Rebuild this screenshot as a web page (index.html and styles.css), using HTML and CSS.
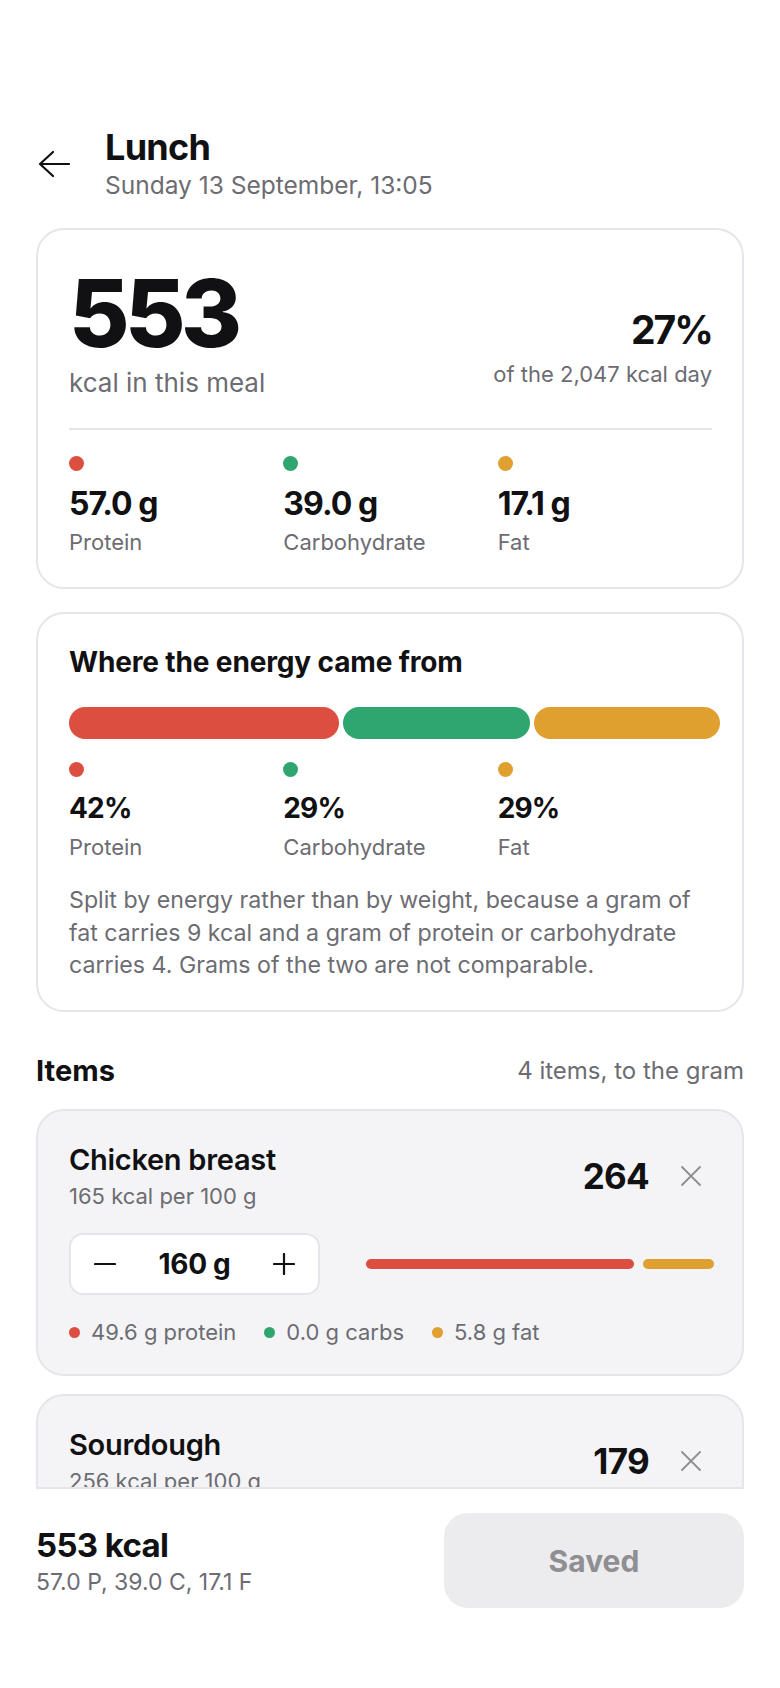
FILE: index.html
```html
<!DOCTYPE html>
<html lang="en">
<head>
    <meta charset="UTF-8">
    <title>Lunch</title>

    <link rel="stylesheet" href="styles.css">
</head>
<body>

    <div class="app">

        <div class="content">

            <div class="header">
                <button class="back">
                    <svg width="32" height="32" viewBox="0 0 32 32">
                        <path d="M31 16H2M15 4L2 16l13 12" fill="none" stroke="#111" stroke-width="2.2" stroke-linecap="round" stroke-linejoin="round"/>
                    </svg>
                </button>
                <div class="title-block">
                    <h1>Lunch</h1>
                    <div class="date">Sunday 13 September, 13:05</div>
                </div>
            </div>

            <div class="card summary">
                <div class="summary-top">
                    <div>
                        <div class="big-kcal">553</div>
                        <div class="muted kcal-label">kcal in this meal</div>
                    </div>
                    <div class="share">
                        <div class="share-pct">27%</div>
                        <div class="muted share-label">of the 2,047 kcal day</div>
                    </div>
                </div>

                <div class="divider"></div>

                <div class="macros">
                    <div class="macro">
                        <span class="dot protein"></span>
                        <div class="macro-value">57.0 g</div>
                        <div class="muted macro-label">Protein</div>
                    </div>
                    <div class="macro">
                        <span class="dot carbs"></span>
                        <div class="macro-value">39.0 g</div>
                        <div class="muted macro-label">Carbohydrate</div>
                    </div>
                    <div class="macro">
                        <span class="dot fat"></span>
                        <div class="macro-value">17.1 g</div>
                        <div class="muted macro-label">Fat</div>
                    </div>
                </div>
            </div>

            <div class="card energy">
                <h2>Where the energy came from</h2>

                <div class="energy-bar">
                    <div class="seg protein" style="width: 42%"></div>
                    <div class="seg carbs" style="width: 29%"></div>
                    <div class="seg fat" style="width: 29%"></div>
                </div>

                <div class="macros">
                    <div class="macro">
                        <span class="dot protein"></span>
                        <div class="macro-value">42%</div>
                        <div class="muted macro-label">Protein</div>
                    </div>
                    <div class="macro">
                        <span class="dot carbs"></span>
                        <div class="macro-value">29%</div>
                        <div class="muted macro-label">Carbohydrate</div>
                    </div>
                    <div class="macro">
                        <span class="dot fat"></span>
                        <div class="macro-value">29%</div>
                        <div class="muted macro-label">Fat</div>
                    </div>
                </div>

                <p class="muted note">Split by energy rather than by weight, because a gram of fat carries 9 kcal and a gram of protein or carbohydrate carries 4. Grams of the two are not comparable.</p>
            </div>

            <div class="items-head">
                <h2>Items</h2>
                <span class="muted">4 items, to the gram</span>
            </div>

            <div class="item">
                <div class="item-top">
                    <div>
                        <div class="item-name">Chicken breast</div>
                        <div class="muted item-sub">165 kcal per 100 g</div>
                    </div>
                    <div class="item-right">
                        <div class="item-kcal">264</div>
                        <button class="remove">
                            <svg width="20" height="20" viewBox="0 0 20 20">
                                <path d="M1 1l18 18M19 1L1 19" stroke="#8e8e93" stroke-width="1.8" stroke-linecap="round"/>
                            </svg>
                        </button>
                    </div>
                </div>

                <div class="item-mid">
                    <div class="stepper">
                        <button class="step">
                            <svg width="22" height="22" viewBox="0 0 22 22"><path d="M1 11h20" stroke="#111" stroke-width="2.2" stroke-linecap="round"/></svg>
                        </button>
                        <div class="step-value">160 g</div>
                        <button class="step">
                            <svg width="22" height="22" viewBox="0 0 22 22"><path d="M1 11h20M11 1v20" stroke="#111" stroke-width="2.2" stroke-linecap="round"/></svg>
                        </button>
                    </div>
                    <div class="mini-bar">
                        <div class="mini protein" style="flex-grow: 198"></div>
                        <div class="mini fat" style="flex-grow: 52"></div>
                    </div>
                </div>

                <div class="item-macros muted">
                    <span><i class="small-dot protein"></i>49.6 g protein</span>
                    <span><i class="small-dot carbs"></i>0.0 g carbs</span>
                    <span><i class="small-dot fat"></i>5.8 g fat</span>
                </div>
            </div>

            <div class="item">
                <div class="item-top">
                    <div>
                        <div class="item-name">Sourdough</div>
                        <div class="muted item-sub">256 kcal per 100 g</div>
                    </div>
                    <div class="item-right">
                        <div class="item-kcal">179</div>
                        <button class="remove">
                            <svg width="20" height="20" viewBox="0 0 20 20">
                                <path d="M1 1l18 18M19 1L1 19" stroke="#8e8e93" stroke-width="1.8" stroke-linecap="round"/>
                            </svg>
                        </button>
                    </div>
                </div>

                <div class="item-mid">
                    <div class="stepper">
                        <button class="step">
                            <svg width="22" height="22" viewBox="0 0 22 22"><path d="M1 11h20" stroke="#111" stroke-width="2.2" stroke-linecap="round"/></svg>
                        </button>
                        <div class="step-value">70 g</div>
                        <button class="step">
                            <svg width="22" height="22" viewBox="0 0 22 22"><path d="M1 11h20M11 1v20" stroke="#111" stroke-width="2.2" stroke-linecap="round"/></svg>
                        </button>
                    </div>
                    <div class="mini-bar">
                        <div class="mini protein" style="flex-grow: 25"></div>
                        <div class="mini carbs" style="flex-grow: 140"></div>
                        <div class="mini fat" style="flex-grow: 14"></div>
                    </div>
                </div>

                <div class="item-macros muted">
                    <span><i class="small-dot protein"></i>6.3 g protein</span>
                    <span><i class="small-dot carbs"></i>35.0 g carbs</span>
                    <span><i class="small-dot fat"></i>1.6 g fat</span>
                </div>
            </div>

        </div>

        <div class="footer">
            <div class="footer-total">
                <div class="footer-kcal">553 kcal</div>
                <div class="muted footer-macros">57.0 P, 39.0 C, 17.1 F</div>
            </div>
            <button class="saved">Saved</button>
        </div>

    </div>

</body>
</html>
```

FILE: styles.css
```css
html, body{
    height: 100%;
}

body{
    margin: 0;
    overflow: hidden;
    background: white;
    color: #111113;
    font-family: Inter, "Noto Sans", sans-serif;
}

button{
    font-family: inherit;
    border: none;
    background: none;
    padding: 0;
    cursor: pointer;
}

.app{
    height: 100%;
    display: flex;
    flex-direction: column;
}

.content{
    flex: 1;
    overflow: hidden;
    padding: 0 36px;
}

.muted{
    color: #6c6c72;
}

/* header */
.header{
    display: flex;
    align-items: center;
    gap: 35px;
    padding-top: 126px;
    margin-bottom: 26px;
}

.back{
    display: flex;
    width: 32px;
    height: 32px;
    margin-left: 2px;
}

h1{
    margin: 0;
    font-size: 36px;
    line-height: 42px;
    font-weight: 700;
    letter-spacing: -0.02em;
}

.date{
    font-size: 24.5px;
    line-height: 34px;
    color: #6c6c72;
}

/* cards */
.card{
    border: 2px solid #e5e5ea;
    border-radius: 28px;
    padding: 32px 30px 30px 31px;
    margin-bottom: 23px;
}

.summary-top{
    display: flex;
    justify-content: space-between;
    align-items: flex-end;
}

.big-kcal{
    font-size: 93px;
    line-height: 96px;
    font-weight: 800;
    letter-spacing: -0.05em;
    margin-top: 3px;
}

.kcal-label{
    font-size: 26px;
    line-height: 32px;
    margin-top: 6px;
}

.share{
    text-align: right;
    padding-bottom: 10px;
}

.share-pct{
    font-size: 39px;
    line-height: 44px;
    font-weight: 700;
    letter-spacing: -0.05em;
    margin-bottom: 7px;
}

.share-label{
    font-size: 22px;
    line-height: 30px;
}

.divider{
    height: 2px;
    background: #e5e5ea;
    margin: 29px 0 26px;
}

.macros{
    display: grid;
    grid-template-columns: repeat(3, 1fr);
}

.dot{
    display: block;
    width: 15px;
    height: 15px;
    border-radius: 50%;
    margin-bottom: 13px;
}

.protein{ background: #dc4f40; }
.carbs{ background: #2fa56f; }
.fat{ background: #e0a030; }

.macro-value{
    font-size: 32px;
    line-height: 40px;
    font-weight: 700;
    letter-spacing: -0.03em;
}

.macro-label{
    font-size: 22px;
    line-height: 30px;
    margin-top: 3px;
}

h2{
    margin: 0;
    font-size: 28px;
    line-height: 32px;
    font-weight: 700;
    letter-spacing: -0.005em;
}

.energy-bar{
    display: flex;
    gap: 4px;
    margin: 29px 0 23px;
}

.seg{
    flex-shrink: 0;
    height: 32px;
    border-radius: 16px;
}

.energy .macro-value{
    font-size: 28px;
    line-height: 36px;
}

.energy .macro-label{
    margin-top: 6px;
}

.note{
    margin: 22px 0 0;
    font-size: 23.2px;
    line-height: 32.5px;
}

.energy{
    padding-bottom: 28px;
}

/* items */
.items-head{
    display: flex;
    justify-content: space-between;
    align-items: center;
    margin: 41px 0 20px;
    font-size: 24px;
}

.items-head h2{
    font-size: 29px;
    line-height: 36px;
    letter-spacing: 0;
}

.item{
    background: #f4f4f6;
    border: 2px solid #e5e5ea;
    border-radius: 28px;
    padding: 31px 31px 27px;
    margin-bottom: 18px;
}

.item-top{
    display: flex;
    justify-content: space-between;
    align-items: center;
}

.item-name{
    font-size: 29px;
    line-height: 36px;
    font-weight: 600;
    letter-spacing: -0.01em;
}

.item-sub{
    font-size: 22px;
    line-height: 30px;
    margin-top: 3px;
}

.item-right{
    display: flex;
    align-items: center;
    gap: 22px;
}

.item-kcal{
    font-size: 35px;
    font-weight: 700;
    letter-spacing: -0.02em;
}

.remove{
    display: flex;
    justify-content: center;
    width: 40px;
}

.item-mid{
    display: flex;
    align-items: center;
    gap: 46px;
    margin-top: 22px;
}

.stepper{
    display: flex;
    align-items: center;
    width: 251px;
    height: 62px;
    box-sizing: border-box;
    padding: 0 12px;
    background: white;
    border: 2px solid #e5e5ea;
    border-radius: 14px;
}

.step{
    display: flex;
    justify-content: center;
    width: 44px;
}

.step-value{
    flex: 1;
    text-align: center;
    font-size: 28px;
    font-weight: 700;
    letter-spacing: -0.01em;
}

.mini-bar{
    flex: 1;
    display: flex;
    gap: 9px;
    margin-right: -3px;
}

.mini{
    height: 10px;
    border-radius: 5px;
}

.item-macros{
    display: flex;
    gap: 28px;
    margin-top: 22px;
    font-size: 22px;
    line-height: 30px;
}

.small-dot{
    display: inline-block;
    width: 11px;
    height: 11px;
    border-radius: 50%;
    margin-right: 11px;
    vertical-align: 2px;
}

/* footer */
.footer{
    display: flex;
    justify-content: space-between;
    align-items: center;
    margin: 0 36px;
    padding: 24px 0 80px;
    border-top: 2px solid #e5e5ea;
}

.footer-kcal{
    font-size: 33px;
    line-height: 40px;
    font-weight: 700;
    letter-spacing: -0.02em;
}

.footer-macros{
    font-size: 23px;
    line-height: 30px;
    margin-top: 2px;
}

.saved{
    width: 300px;
    height: 95px;
    border-radius: 24px;
    background: #ececee;
    color: #8e8e93;
    font-size: 30px;
    font-weight: 700;
}
```
